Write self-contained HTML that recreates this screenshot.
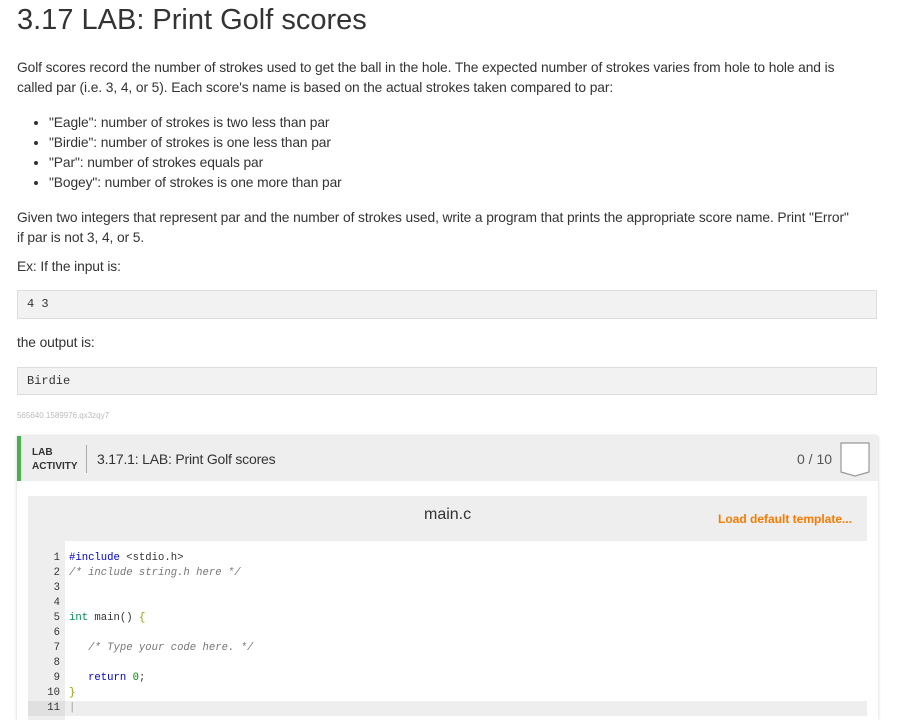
<html><head><style>
body{margin:0;background:#fff;font-family:"Liberation Sans",sans-serif;color:#333;width:914px;height:720px;overflow:hidden;position:relative}
.a{position:absolute}
p{margin:0}
.t{font-size:13.8px;line-height:20px;letter-spacing:-0.1px}
.pre{position:absolute;left:17px;width:860px;background:#f2f2f2;border:1px solid #ddd;font-family:"Liberation Mono",monospace;font-size:12px;color:#333;padding-left:9px;box-sizing:border-box}
.code{font-family:"Liberation Mono",monospace;font-size:10.6px;line-height:15px;white-space:pre}
</style></head><body>
<div class="a" style="left:17px;top:4px;font-size:29px;color:#333">3.17 LAB: Print Golf scores</div>
<div class="a t" style="left:17px;top:58px;width:848px">Golf scores record the number of strokes used to get the ball in the hole. The expected number of strokes varies from hole to hole and is called par (i.e. 3, 4, or 5). Each score's name is based on the actual strokes taken compared to par:</div>
<ul class="a t" style="left:17px;top:113px;margin:0;padding-left:32px">
<li>"Eagle": number of strokes is two less than par</li>
<li>"Birdie": number of strokes is one less than par</li>
<li>"Par": number of strokes equals par</li>
<li>"Bogey": number of strokes is one more than par</li></ul>
<div class="a t" style="left:17px;top:208px;width:870px">Given two integers that represent par and the number of strokes used, write a program that prints the appropriate score name. Print "Error"<br>if par is not 3, 4, or 5.</div>
<div class="a t" style="left:17px;top:257px">Ex: If the input is:</div>
<div class="pre" style="top:290px;height:29px;line-height:27px">4 3</div>
<div class="a t" style="left:17px;top:333px">the output is:</div>
<div class="pre" style="top:367px;height:28px;line-height:26px">Birdie</div>
<div class="a" style="left:17px;top:411px;font-size:8px;color:#bbb">565640.1589976.qx3zqy7</div>
<div class="a" style="left:17px;top:436px;width:861px;height:284px;box-shadow:0 0 3px #ccc"></div>
<div class="a" style="left:17px;top:436px;width:861px;height:45px;background:#eee;border-left:4px solid #4caf50;box-sizing:border-box"></div>
<div class="a" style="left:32px;top:446px;font-size:10px;font-weight:bold;line-height:14px;color:#333">LAB<br>ACTIVITY</div>
<div class="a" style="left:86px;top:445px;width:1px;height:28px;background:#aaa"></div>
<div class="a" style="left:97px;top:451px;font-size:14px;letter-spacing:-0.2px">3.17.1: LAB: Print Golf scores</div>
<div class="a" style="left:797px;top:451px;font-size:14px;color:#555">0 / 10</div>
<svg class="a" style="left:840px;top:442px" width="30" height="36"><path d="M1 1H29V30L15 34L1 30Z" fill="#fff" stroke="#999" stroke-width="1.2"/></svg>
<div class="a" style="left:28px;top:496px;width:839px;height:45px;background:#eee"></div>
<div class="a" style="left:424px;top:506px;font-size:16px;color:#333">main.c</div>
<div class="a" style="left:718px;top:512px;font-size:12px;font-weight:bold;color:#f57c00">Load default template...</div>
<div class="a" style="left:28px;top:541px;width:37px;height:179px;background:#eee"></div>
<div class="a" style="left:65px;top:701px;width:802px;height:15px;background:#eee"></div>
<div class="a" style="left:28px;top:701px;width:37px;height:15px;background:#e0e0e0"></div>
<div class="a code" style="left:30px;top:551px;width:30px;text-align:right;color:#333">1
2
3
4
5
6
7
8
9
10
11</div>
<div class="a code" style="left:69px;top:551px;color:#333"><span style="color:#00c">#include</span> &lt;stdio.h&gt;
<i style="color:#777">/* include string.h here */</i>


<span style="color:#085">int</span> main() <span style="color:#990">{</span>

   <i style="color:#777">/* Type your code here. */</i>

   <span style="color:#00c">return</span> <span style="color:#080">0</span>;
<span style="color:#990">}</span>
<span style="color:#999">|</span></div>
</body></html>
